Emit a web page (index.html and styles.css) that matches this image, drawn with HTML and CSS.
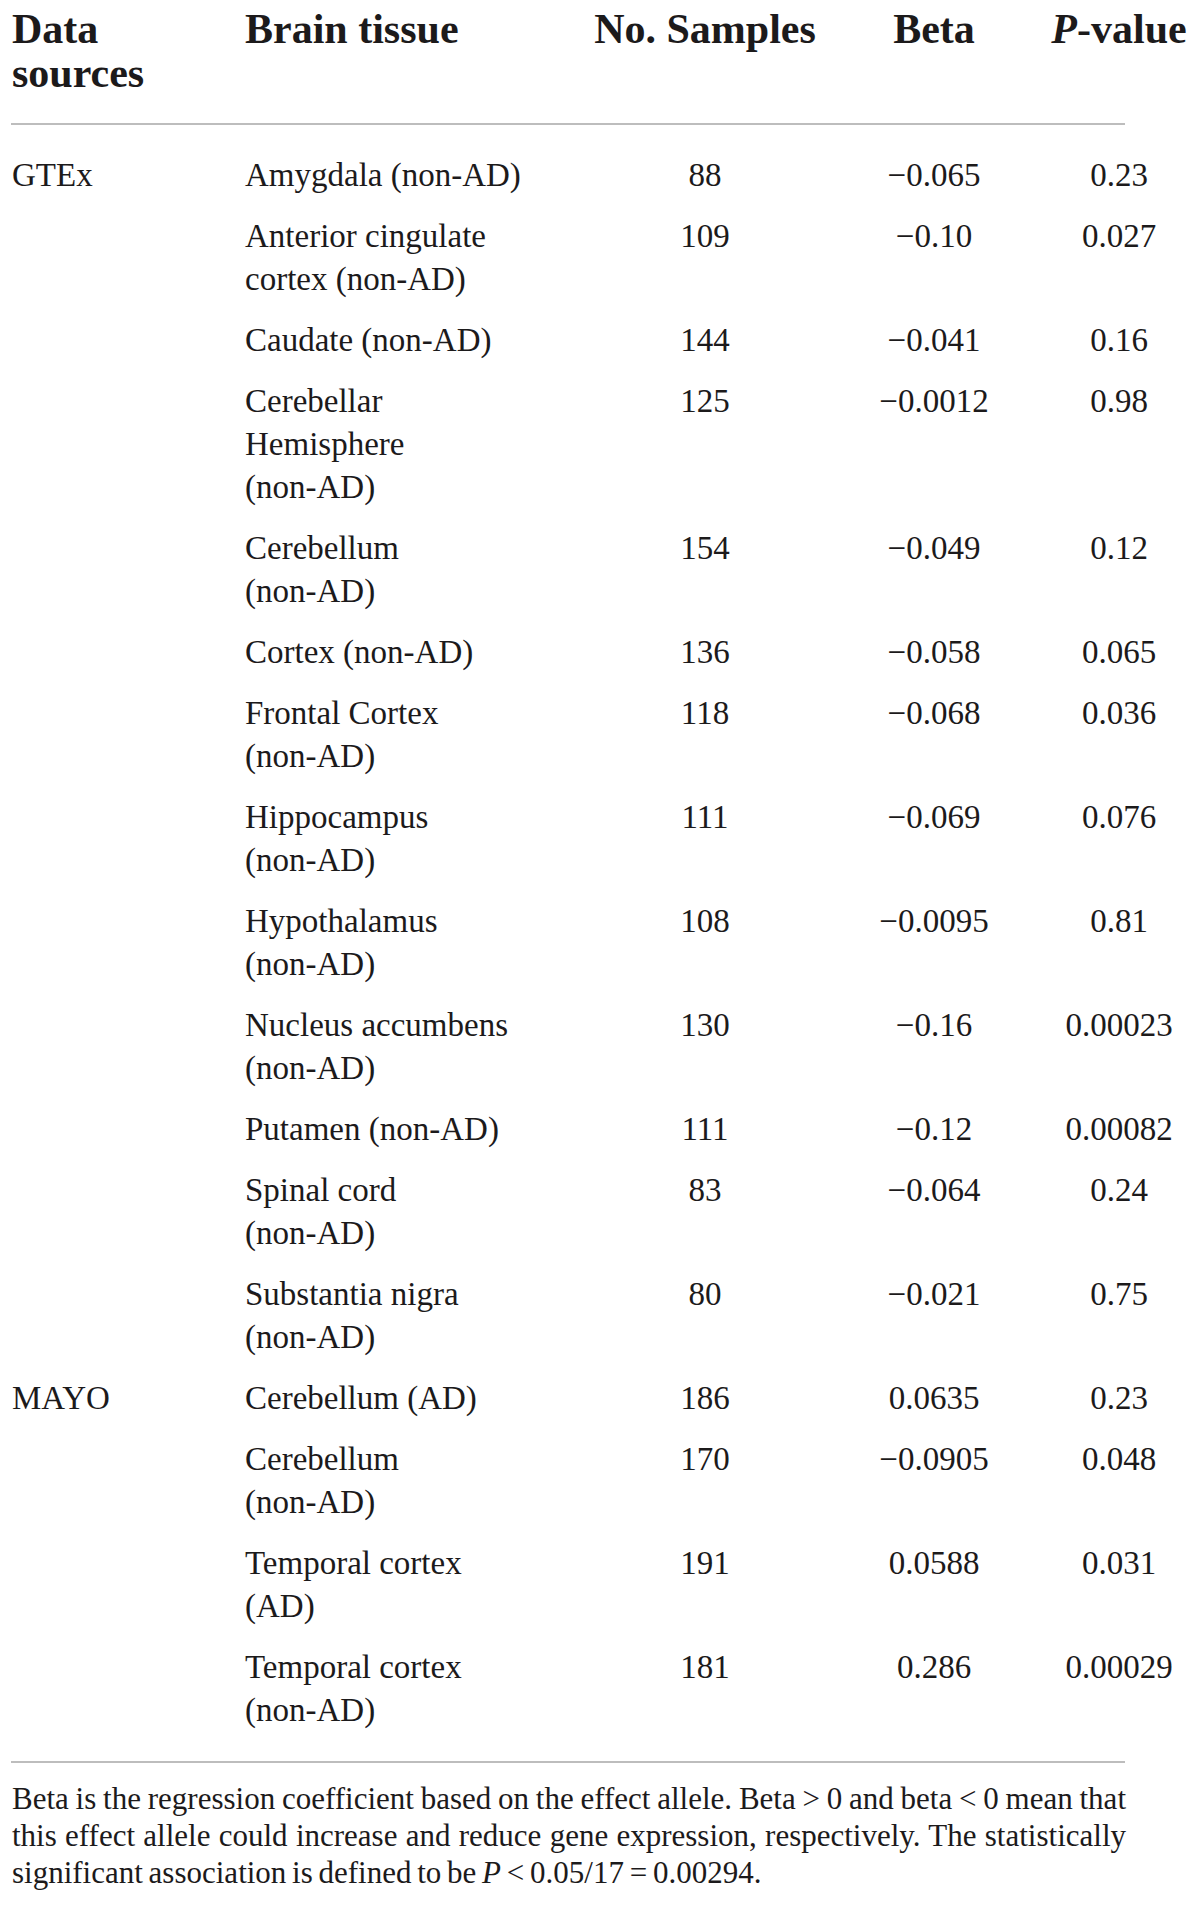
FILE: index.html
```html
<!DOCTYPE html>
<html>
<head>
<meta charset="utf-8">
<link rel="stylesheet" href="styles.css">
</head>
<body>
<div class="page">
  <div class="row head">
    <div class="c1">Data<br>sources</div>
    <div class="c2">Brain tissue</div>
    <div class="c3">No. Samples</div>
    <div class="c4">Beta</div>
    <div class="c5"><i>P</i>-value</div>
  </div>
  <div class="rule"></div>
  <div class="body">
    <div class="row"><div class="c1">GTEx</div><div class="c2">Amygdala (non-AD)</div><div class="c3">88</div><div class="c4">−0.065</div><div class="c5">0.23</div></div>
    <div class="row"><div class="c1"></div><div class="c2">Anterior cingulate<br>cortex (non-AD)</div><div class="c3">109</div><div class="c4">−0.10</div><div class="c5">0.027</div></div>
    <div class="row"><div class="c1"></div><div class="c2">Caudate (non-AD)</div><div class="c3">144</div><div class="c4">−0.041</div><div class="c5">0.16</div></div>
    <div class="row"><div class="c1"></div><div class="c2">Cerebellar<br>Hemisphere<br>(non-AD)</div><div class="c3">125</div><div class="c4">−0.0012</div><div class="c5">0.98</div></div>
    <div class="row"><div class="c1"></div><div class="c2">Cerebellum<br>(non-AD)</div><div class="c3">154</div><div class="c4">−0.049</div><div class="c5">0.12</div></div>
    <div class="row"><div class="c1"></div><div class="c2">Cortex (non-AD)</div><div class="c3">136</div><div class="c4">−0.058</div><div class="c5">0.065</div></div>
    <div class="row"><div class="c1"></div><div class="c2">Frontal Cortex<br>(non-AD)</div><div class="c3">118</div><div class="c4">−0.068</div><div class="c5">0.036</div></div>
    <div class="row"><div class="c1"></div><div class="c2">Hippocampus<br>(non-AD)</div><div class="c3">111</div><div class="c4">−0.069</div><div class="c5">0.076</div></div>
    <div class="row"><div class="c1"></div><div class="c2">Hypothalamus<br>(non-AD)</div><div class="c3">108</div><div class="c4">−0.0095</div><div class="c5">0.81</div></div>
    <div class="row"><div class="c1"></div><div class="c2">Nucleus accumbens<br>(non-AD)</div><div class="c3">130</div><div class="c4">−0.16</div><div class="c5">0.00023</div></div>
    <div class="row"><div class="c1"></div><div class="c2">Putamen (non-AD)</div><div class="c3">111</div><div class="c4">−0.12</div><div class="c5">0.00082</div></div>
    <div class="row"><div class="c1"></div><div class="c2">Spinal cord<br>(non-AD)</div><div class="c3">83</div><div class="c4">−0.064</div><div class="c5">0.24</div></div>
    <div class="row"><div class="c1"></div><div class="c2">Substantia nigra<br>(non-AD)</div><div class="c3">80</div><div class="c4">−0.021</div><div class="c5">0.75</div></div>
    <div class="row"><div class="c1">MAYO</div><div class="c2">Cerebellum (AD)</div><div class="c3">186</div><div class="c4">0.0635</div><div class="c5">0.23</div></div>
    <div class="row"><div class="c1"></div><div class="c2">Cerebellum<br>(non-AD)</div><div class="c3">170</div><div class="c4">−0.0905</div><div class="c5">0.048</div></div>
    <div class="row"><div class="c1"></div><div class="c2">Temporal cortex<br>(AD)</div><div class="c3">191</div><div class="c4">0.0588</div><div class="c5">0.031</div></div>
    <div class="row"><div class="c1"></div><div class="c2">Temporal cortex<br>(non-AD)</div><div class="c3">181</div><div class="c4">0.286</div><div class="c5">0.00029</div></div>
  </div>
  <div class="rule"></div>
  <div class="note">
    <span class="line just">Beta is the regression coefficient based on the effect allele. Beta &gt; 0 and beta &lt; 0 mean that</span>
    <span class="line just">this effect allele could increase and reduce gene expression, respectively. The statistically</span>
    <span class="line">significant association is defined to be <i>P</i> &lt; 0.05/17 = 0.00294.</span>
  </div>
</div>
</body>
</html>
```

FILE: styles.css
```css
html, body {
  margin: 0;
  padding: 0;
  background: #ffffff;
}

body {
  font-family: "Liberation Serif", "Times New Roman", serif;
  color: #1c1a1b;
}

.page {
  padding: 7px 0 0 11px;
  width: 1189px;
}

.row {
  display: grid;
  grid-template-columns: 234px 355px 210px 248px 122px;
  align-items: start;
}

.c1, .c2 {
  text-align: left;
  white-space: nowrap;
}

.c1 {
  padding-left: 1px;
}

.c3, .c4, .c5 {
  text-align: center;
  white-space: nowrap;
  justify-self: center;
}

.head {
  font-size: 42px;
  font-weight: bold;
  line-height: 44px;
  padding-bottom: 28px;
}

.head i {
  font-style: italic;
}

.rule {
  width: 1114px;
  height: 2px;
  background: #bdbdbd;
}

.body {
  padding: 20px 0 20px;
  font-size: 33px;
  line-height: 43px;
}

.body .row {
  padding: 9px 0;
}

.note {
  width: 1114px;
  margin-top: 17px;
  font-size: 31px;
  line-height: 37px;
  word-spacing: -2px;
  padding-left: 1px;
}

.line {
  display: block;
  white-space: nowrap;
}

.line.just {
  white-space: normal;
  text-align: justify;
  text-align-last: justify;
}
```
